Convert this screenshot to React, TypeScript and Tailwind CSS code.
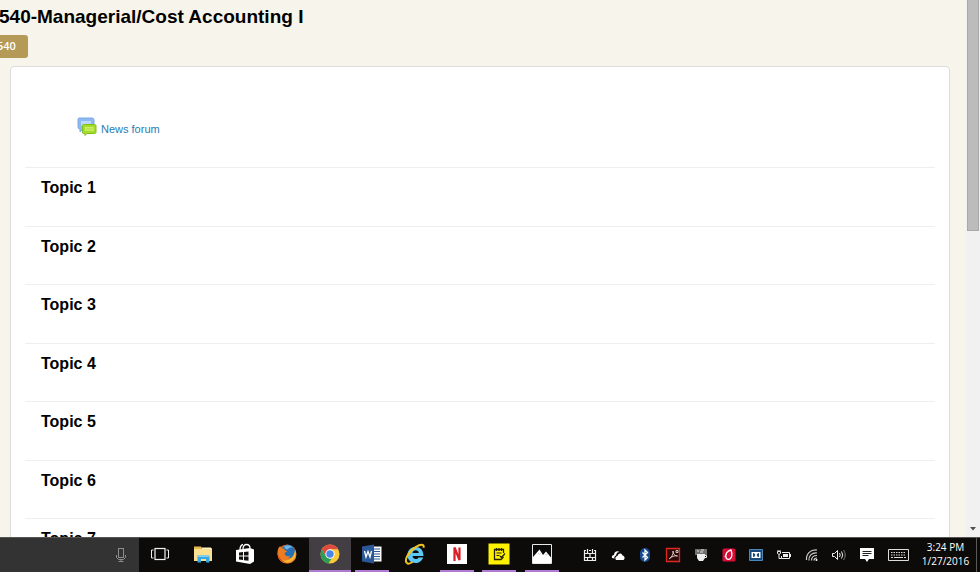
import React from 'react';

const topics = ['Topic 1', 'Topic 2', 'Topic 3', 'Topic 4', 'Topic 5', 'Topic 6', 'Topic 7'];

const apps = [
  { name: 'Task View', icon: <TaskViewIcon />, open: false, active: false },
  { name: 'File Explorer', icon: <FolderIcon />, open: false, active: false },
  { name: 'Store', icon: <StoreIcon />, open: false, active: false },
  { name: 'Firefox', icon: <FirefoxIcon />, open: false, active: false },
  { name: 'Chrome', icon: <ChromeIcon />, open: true, active: true },
  { name: 'Word', icon: <WordIcon />, open: true, active: false },
  { name: 'Internet Explorer', icon: <IeIcon />, open: false, active: false },
  { name: 'Netflix', icon: <NetflixIcon />, open: true, active: false },
  { name: 'Notes', icon: <NotesIcon />, open: true, active: false },
  { name: 'Photos', icon: <PhotosIcon />, open: true, active: false },
];

const tray = [
  { name: 'Firewall', icon: <FirewallIcon /> },
  { name: 'OneDrive', icon: <CloudIcon /> },
  { name: 'Bluetooth', icon: <BluetoothIcon /> },
  { name: 'Reader', icon: <ReaderIcon /> },
  { name: 'Java', icon: <CupIcon /> },
  { name: 'Security', icon: <SecurityIcon /> },
  { name: 'Dolby', icon: <DolbyIcon /> },
  { name: 'Battery', icon: <BatteryIcon /> },
  { name: 'Wi-Fi', icon: <WifiIcon /> },
  { name: 'Volume', icon: <VolumeIcon /> },
  { name: 'Notifications', icon: <NoticeIcon /> },
];

function MicIcon() {
  return (
    <svg width="12" height="16" viewBox="0 0 12 16" fill="none" stroke="#8c8c8c">
      <rect x="3.5" y="1.5" width="5" height="9" />
      <path d="M1.500 8v2.500l2 2h5l2-2V8M6 12.500v2M3.500 14.500h5" />
    </svg>
  );
}

function TaskViewIcon() {
  return (
    <svg width="20" height="14" viewBox="0 0 20 14" fill="none" stroke="#f2f2f2">
      <rect x="5" y="1.500" width="10" height="11" strokeWidth="1.200" />
      <path d="M3.500 3H1.500v8h2M16.500 3h2v8h-2" />
    </svg>
  );
}

function FolderIcon() {
  return (
    <svg width="20" height="18" viewBox="0 0 20 18">
      <path d="M1 1.500h7l1 1.500h10v13H1z" fill="#e8b84f" />
      <path d="M1 4h18v12H1z" fill="#fbe08f" />
      <path d="M9 2.500h9v1.500H9z" fill="#fff3c4" />
      <path d="M4.500 17.500V10.500h12v7h-3.500v-3.500H8v3.500z" fill="#35a9e6" />
      <path d="M4.500 10.500h12v1.500h-12z" fill="#7fd0f7" />
    </svg>
  );
}

function StoreIcon() {
  return (
    <svg width="20" height="22" viewBox="0 0 20 22">
      <path d="M5 7c0-3 1-5 3-5.500M8 6c0-3 1.500-4.500 3.500-4.500S15 3 15 5.500" fill="none" stroke="#fff" strokeWidth="1.300" />
      <path d="M1 7l14-2 4 1.500v12L15 21 1 18.500z" fill="#fff" />
      <path d="M4 9.500l4-.5v3.500H4zM9 9l4.500-.6v4.100H9zM4 13.500h4V17l-4-.500zM9 13.500h4.500v4.200L9 17.200z" fill="#11110e" />
    </svg>
  );
}

function FirefoxIcon() {
  return (
    <svg width="20" height="20" viewBox="0 0 20 20">
      <circle cx="10" cy="10" r="9.500" fill="#e66a1c" />
      <circle cx="11" cy="8" r="7.200" fill="#256fb8" />
      <path d="M7 2.500C10 .500 14 1 16 4c-2-1-4 0-5 1s-3 0-4-2.500z" fill="#6bb8e8" />
      <path d="M1.500 4C2 3 3 2.500 3.500 2c0 1 .5 2 1.500 2.500h2.500C7 6 8 6.500 10 7c0 1-2 1.500-2.500 2.500C8 12 11 13 13.500 11.500c-1 2-2 2.500-3 2.500 4 1 8-2 7.500-8 2 4 1.500 9-2.500 12-4 2.500-10 1.500-13-2.500C0 12 0 7 1.500 4z" fill="#ee7d20" />
      <path d="M18 6c2 5 0 10-5 12-4 1.500-8 0-10-2 7 2 14-1 15-10z" fill="#f7b733" />
      <path d="M1 8c0 5 3 9 8 10.500C4 19 .500 14 1 8z" fill="#c53a1c" />
    </svg>
  );
}

function ChromeIcon() {
  return (
    <svg width="20" height="20" viewBox="0 0 20 20">
      <circle cx="10" cy="10" r="9.500" fill="#fccb3c" />
      <path d="M1.800 5.300A9.500 9.500 0 0118.200 5.300H10L5.900 12.300z" fill="#dd4b3e" />
      <path d="M1.800 5.300L5.900 12.300 10 14.500l1.500.3-3.200 4.600A9.500 9.500 0 011.800 5.300z" fill="#2a9d58" />
      <circle cx="10" cy="10" r="4.700" fill="#fff" />
      <circle cx="10" cy="10" r="3.700" fill="#4a86e8" />
    </svg>
  );
}

function WordIcon() {
  return (
    <svg width="20" height="20" viewBox="0 0 20 20">
      <path d="M10 2.500h9.500v15H10z" fill="#fff" />
      <path d="M12 5h6M12 7.500h6M12 10h6M12 12.500h6M12 15h6" stroke="#2b5797" />
      <path d="M0 2.500L12 .500v19L0 17.500z" fill="#2b5797" />
      <path d="M2.500 7l1.500 6 2-5.500L8 13l1.500-6" fill="none" stroke="#fff" strokeWidth="1.300" />
    </svg>
  );
}

function IeIcon() {
  return (
    <svg width="22" height="22" viewBox="0 0 22 22">
      <path
        d="M19.500 13H8.500c.2 2 1.500 3 3.200 3 1.300 0 2.300-.5 2.800-1.500h4.600C18 18 15 20 11.500 20 6.500 20 3.500 16.700 3.500 12S6.700 4 11.500 4s8 3.300 8 9zM14.800 10c-.2-1.700-1.400-2.700-3.100-2.700S8.800 8.300 8.500 10z"
        fill="#5cc8f3"
      />
      <path d="M3.500 20.500C-1 18 5 8 12 3.800c4-2.500 8.500-3.300 7.500.900M3.500 20.500c1.500.6 3.500-.500 5-1.500" fill="none" stroke="#f5c321" strokeWidth="2" />
    </svg>
  );
}

function NetflixIcon() {
  return (
    <svg width="22" height="22" viewBox="0 0 22 22">
      <path d="M1 1h20v20H1z" fill="#fff" />
      <path d="M8.500 18V4.500l5 12.500V4.500" fill="none" stroke="#dc1f26" strokeWidth="2.200" />
    </svg>
  );
}

function NotesIcon() {
  return (
    <svg width="22" height="22" viewBox="0 0 22 22">
      <path d="M.500.500h21v21H.500z" fill="#fff200" />
      <path d="M15.500 10V6.500h-9v10h6.500l2.500-2.500" fill="none" stroke="#24220a" strokeWidth="1.300" />
      <path d="M8.500 5v3M11 5v3M13.500 5v3M8.500 10h5M8.500 12.500h3M12 13l1.500 1.500 3.500-4" fill="none" stroke="#24220a" strokeWidth="1.200" />
    </svg>
  );
}

function PhotosIcon() {
  return (
    <svg width="20" height="20" viewBox="0 0 20 20">
      <path d="M.500.500h19v19H.500z" fill="#090909" stroke="#e8e8e8" />
      <path d="M1 13l6.500-7.500L11 11l3-3.500 5 6V19H1z" fill="#fff" />
      <path d="M6 9l1.500 1.500L9 9M13 10l1 1 1.500-1" fill="none" stroke="#aaa" strokeWidth=".6" />
    </svg>
  );
}

function FirewallIcon() {
  return (
    <svg width="14" height="14" viewBox="0 0 14 14" fill="none" stroke="#eee" strokeWidth="1.200">
      <path d="M1.500 2v10.500h11V2M1 5.500h12M1 9.500h12M4.500 1v4M9.500 1v4M7 5.500v4M4.500 9.500v3M9.500 9.500v3M1 2.500h2M6 2.500h2M11 2.500h2" />
    </svg>
  );
}

function CloudIcon() {
  return (
    <svg width="14" height="12" viewBox="0 0 14 12" fill="#fff">
      <path d="M1 9C.500 7 1.500 6 3 6c0-3 3-5 5.500-3-2 0-3 1-3.500 3.500C3.500 7 3 8 3.500 9.500z" />
      <path d="M5 11C3.500 9 5 7 6.500 7c.5-3 4-3.500 5-.5 2 0 3 3.500 1 4.500z" />
    </svg>
  );
}

function BluetoothIcon() {
  return (
    <svg width="12" height="16" viewBox="0 0 12 16">
      <rect x="1" y="1" width="10" height="14" rx="5" fill="#164a91" />
      <path d="M3.500 5.500L8.500 10.500 6 13V3l2.500 2.500-5 5" fill="none" stroke="#fff" strokeWidth="1.300" />
    </svg>
  );
}

function ReaderIcon() {
  return (
    <svg width="16" height="16" viewBox="0 0 16 16">
      <path d="M1.500 1.500h13v13h-13z" fill="#2b0908" stroke="#dd281e" strokeWidth="1.300" />
      <path d="M4 12c3-2 4.500-5 4-8 0 3 2 5 4.500 5-2-.6-5 .2-7.500 2M11 3.500h2v2h-2z" fill="none" stroke="#d8c5c3" />
    </svg>
  );
}

function CupIcon() {
  return (
    <svg width="16" height="16" viewBox="0 0 16 16">
      <path d="M2 2h12v6H2z" fill="#707070" />
      <path d="M4 4h2M8 3h3M7 5h3" stroke="#ddd" />
      <path d="M4 7h8v4l-2 3H6l-2-3z" fill="#eee" />
      <path d="M12 8.500h1.500v2H12" fill="none" stroke="#eee" />
    </svg>
  );
}

function SecurityIcon() {
  return (
    <svg width="14" height="14" viewBox="0 0 14 14">
      <rect x=".5" y=".5" width="13" height="13" rx="1.500" fill="#d90e36" />
      <path d="M9 2C5 3 3 6 4 9.500c.5 2 3 2.500 4.500 1C11 8 10 5 9 2zM4.500 6L3 9" fill="none" stroke="#fff" strokeWidth="1.300" />
    </svg>
  );
}

function DolbyIcon() {
  return (
    <svg width="14" height="12" viewBox="0 0 14 12">
      <path d="M.500.500h13v11H.500z" fill="#174b7c" stroke="#4c86b8" />
      <path d="M2.500 3h9v6h-9z" fill="#fff" />
      <path d="M4 4c3 0 3 4 0 4zM10 4c-3 0-3 4 0 4z" fill="#174b7c" />
    </svg>
  );
}

function BatteryIcon() {
  return (
    <svg width="16" height="12" viewBox="0 0 16 12" fill="none" stroke="#eee">
      <path d="M6 3.500h7.500v6H5.500V7M14.500 5v3M1.500 2.500v2l1.500 1 1.500-1v-2zM3 5.500v4h2M2 1v1M4 1v1" />
      <path d="M7 5h5v3H7z" fill="#eee" stroke="none" />
    </svg>
  );
}

function WifiIcon() {
  return (
    <svg width="14" height="14" viewBox="0 0 14 14" fill="none" stroke="#ccc" strokeWidth="1.200">
      <path d="M1.500 12C1 6 5 1.500 12 2M4 12.500C3.500 8 6.500 4.500 12 5M6.500 12.500c0-3 2-5 5.500-5M9 12.500c0-1.500 1-2.500 3-2.500" />
      <circle cx="11.500" cy="12" r="1" fill="#fff" stroke="none" />
    </svg>
  );
}

function VolumeIcon() {
  return (
    <svg width="16" height="12" viewBox="0 0 16 12" fill="none" stroke="#eee">
      <path d="M1.500 4.500h2l3-3v9l-3-3h-2zM8.500 4q1.500 2 0 4M10.500 2.500q2.500 3.500 0 7" />
      <path d="M12.500 1q3.500 5 0 10" stroke="#777" />
    </svg>
  );
}

function NoticeIcon() {
  return (
    <svg width="14" height="14" viewBox="0 0 14 14">
      <path d="M0 0h14v11H9l-2 3-2-3H0z" fill="#fff" />
      <path d="M2.500 3.500h9M2.500 5.500h9M2.500 7.500h6" stroke="#222" />
    </svg>
  );
}

function KeyboardIcon() {
  return (
    <svg width="21" height="12" viewBox="0 0 21 12" fill="none" stroke="#ddd">
      <path d="M.500.500h20v11H.500z" />
      <path d="M3 3.500h15M3 6h15" strokeDasharray="1.500 1" />
      <path d="M3 8.500h2M6 8.500h9M16 8.500h2" />
    </svg>
  );
}

function ForumIcon() {
  return (
    <svg width="20" height="20" viewBox="0 0 20 20">
      <path d="M2 1h13q2 0 2 2v8q0 1-2 1H6l-3 3v-3q-2 0-2-2V3q0-2 1-2z" fill="#8db9f2" stroke="#7ca8e4" />
      <path d="M4 4h10v5H4z" fill="#bcd7fa" />
      <path d="M6.500 7.500h11q1.500 0 1.500 1.500v6q0 1.500-1.500 1.500H10L8 18.500v-2H6.500Q5.500 16.500 5.500 15V9q0-1.500 1-1.500z" fill="#a4dc2c" stroke="#83bd1e" />
      <path d="M8 10h8.500v4H8z" fill="#cdf069" />
      <path d="M9 11.500h6.500M9 13h6.500" stroke="#a9db45" strokeWidth=".6" />
    </svg>
  );
}

function Taskbar() {
  return (
    <footer className="flex h-[35px] shrink-0 border-t border-[#555] bg-[#0d0b0a]">
      <div className="flex w-[139px] shrink-0 items-center justify-end bg-[#333333] pr-3">
        <button aria-label="Speak to search"><MicIcon /></button>
      </div>
      <nav className="flex w-[424px] shrink-0">
        {apps.map((app) => (
          <button
            key={app.name}
            aria-label={app.name}
            className={`flex flex-1 flex-col items-center ${app.active ? 'bg-[#423e44]' : ''}`}
          >
            <span className="flex flex-1 items-center">{app.icon}</span>
            <span className={`h-[2px] ${app.active ? 'w-full' : 'w-[34px]'} ${app.open ? 'bg-[#b07bd2]' : ''}`} />
          </button>
        ))}
      </nav>
      <div className="ml-auto flex shrink-0">
        <div className="flex w-[305px]">
          {tray.map((item) => (
            <button key={item.name} aria-label={item.name} className="flex flex-1 items-center justify-center">
              {item.icon}
            </button>
          ))}
        </div>
        <button aria-label="Touch keyboard" className="flex w-[34px] items-center justify-center">
          <KeyboardIcon />
        </button>
        <button className="w-[62px] border-r border-[#5a5a5a] pb-0.5 font-['Open_Sans',sans-serif] text-[10px] leading-[14px] whitespace-nowrap text-white">
          3:24 PM<br />1/27/2016
        </button>
        <div className="w-[3px]" />
      </div>
    </footer>
  );
}

export default function App() {
  return (
    <div className="flex h-screen flex-col overflow-hidden bg-[#f7f4eb] font-['Liberation_Sans',Arial,sans-serif] text-black">
      <div className="flex min-h-0 flex-1">
        <main className="min-w-0 flex-1 overflow-hidden">
          <h1 className="-ml-px pt-[5px] text-[19px] leading-6 font-bold whitespace-nowrap">
            540-Managerial/Cost Accounting I
          </h1>

          {/* Breadcrumb */}
          <nav className="mt-1.5 flex">
            <a
              href="#"
              className="-ml-1 h-[23px] rounded-[3px] bg-[#b59a57] pr-3 pl-px font-['Open_Sans',sans-serif] text-[11px] leading-[21px] font-semibold text-white"
            >
              540
            </a>
          </nav>

          {/* Course content */}
          <section className="mt-2 mr-4 ml-[10px] rounded-[4px] border border-[#dddddd] bg-white px-[14px] pt-[50px]">
            <a href="#" className="ml-[52px] flex h-[50px] items-start gap-1 text-[11px] text-[#2a7ab5]">
              <ForumIcon />
              <span className="pt-1 leading-4">News forum</span>
            </a>
            <ul>
              {topics.map((topic) => (
                <li key={topic} className="border-t border-[#eeeeee] px-4 pt-2 odd:h-[59px] even:h-[58px]">
                  <h3 className="text-[16px] leading-6 font-bold">{topic}</h3>
                </li>
              ))}
            </ul>
          </section>
        </main>

        {/* Scrollbar */}
        <aside className="flex w-[14px] shrink-0 flex-col items-center justify-between bg-[#f1f1f1]">
          <div className="h-[43%] w-3 border border-t-0 border-[#a8a8a8] bg-[#bcbcbc]" />
          <svg className="mb-1" width="8" height="8" viewBox="0 0 8 8">
            <path d="M1 2h6L4 5.500z" fill="#505050" />
          </svg>
        </aside>
      </div>
      <Taskbar />
    </div>
  );
}
